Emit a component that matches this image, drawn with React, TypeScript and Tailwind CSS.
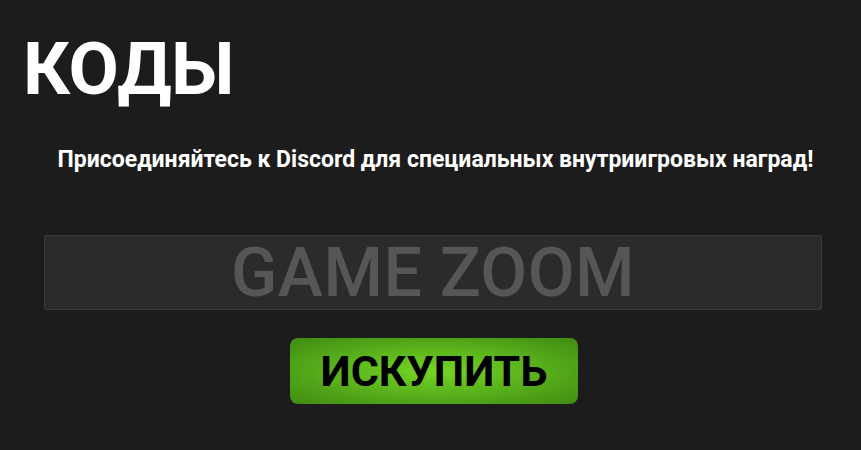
export default function App() {
  return (
    <div className="w-[861px] h-[450px] bg-[#1d1c1c] text-white font-['Roboto',sans-serif] flex flex-col overflow-hidden">
      <h1 className="pl-[23px] pt-[28px] text-[73px] leading-[82px] font-bold tracking-[-0.5px]">КОДЫ</h1>
      <p className="mt-[36px] text-center pl-[10px] text-[23px] leading-[28px] font-bold">
        Присоединяйтесь к Discord для специальных внутриигровых наград!
      </p>
      <div className="mt-[61px] mx-[44px] w-[778px] h-[75px] bg-[#2b2b2b] border border-[#3c3c3c] rounded-[2px] flex items-center justify-center">
        <input
          placeholder="GAME ZOOM"
          className="w-full bg-transparent text-center text-[68px] font-medium tracking-[0.5px] placeholder:text-[#565656] outline-none"
        />
      </div>
      <div className="mt-[28px] flex justify-center pl-[7px]">
        <button className="w-[288px] h-[66px] rounded-[8px] bg-[radial-gradient(ellipse_at_center,#74d622_0%,#5cb51c_45%,#3f8a12_100%)] text-black text-[43px] font-bold leading-none">
          ИСКУПИТЬ
        </button>
      </div>
    </div>
  );
}
